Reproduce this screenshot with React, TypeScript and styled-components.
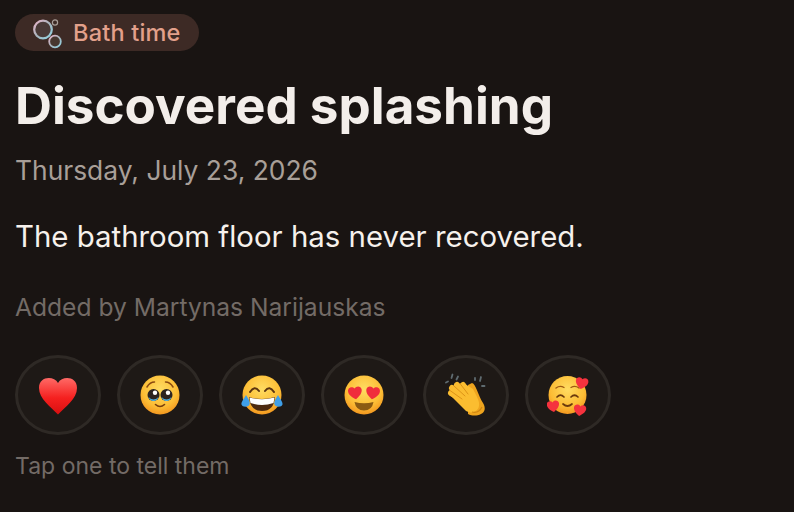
import React from 'react';
import styled, { createGlobalStyle } from 'styled-components';

const GlobalStyle = createGlobalStyle`
  html, body {
    margin: 0;
    padding: 0;
    background: #191412;
  }
  body {
    font-family: Inter, "Liberation Sans", sans-serif;
  }
`;

const Page = styled.div`
  width: 794px;
  height: 512px;
  box-sizing: border-box;
  padding: 14px 15px 0;
  overflow: hidden;
  background: #191412;
`;

const Badge = styled.div`
  display: inline-flex;
  align-items: center;
  gap: 9px;
  height: 37px;
  box-sizing: border-box;
  padding: 0 18px 0 17px;
  border-radius: 19px;
  background: #3d2a25;
  color: #e2a08b;
  font-size: 23.5px;
  font-weight: 500;
  letter-spacing: 0.2px;
`;

const Title = styled.h1`
  margin: 19px 0 0;
  font-size: 51.2px;
  line-height: 66px;
  font-weight: 700;
  color: #f3eeea;
`;

const DateLine = styled.div`
  margin-top: 15px;
  font-size: 26.4px;
  line-height: 34px;
  color: #a89f98;
`;

const Body = styled.p`
  margin: 31px 0 0;
  font-size: 29.4px;
  line-height: 38px;
  color: #f6f1ec;
`;

const Author = styled.div`
  margin-top: 36px;
  font-size: 24.6px;
  line-height: 30px;
  color: #736b66;
`;

const Reactions = styled.div`
  display: flex;
  gap: 16px;
  margin-top: 33px;
`;

const ReactionButton = styled.button`
  width: 86px;
  height: 80px;
  padding: 0;
  display: flex;
  align-items: center;
  justify-content: center;
  box-sizing: border-box;
  border: 3px solid #2e2925;
  border-radius: 50%;
  background: #1e1916;
`;

const Hint = styled.div`
  margin-top: 17px;
  font-size: 23px;
  line-height: 28px;
  color: #736b66;
`;

const Bubbles = () => (
  <svg width="32" height="32" viewBox="0 0 32 32" fill="none">
    <defs>
      <linearGradient id="bub" x1="0" y1="0" x2="1" y2="1">
        <stop offset="0" stopColor="#e8b4c8" />
        <stop offset="0.5" stopColor="#a8b4bc" />
        <stop offset="1" stopColor="#8fd6e6" />
      </linearGradient>
    </defs>
    <circle cx="11" cy="12.5" r="8.8" fill="#4a3a37" stroke="url(#bub)" strokeWidth="2.2" />
    <circle cx="23" cy="24.5" r="5.8" fill="#47372f" stroke="url(#bub)" strokeWidth="1.8" />
    <circle cx="23" cy="5.5" r="2.6" stroke="#a89e98" strokeWidth="1.2" />
  </svg>
);

const FaceDefs = ({ id }: { id: string }) => (
  <radialGradient id={id} cx="0.5" cy="0.35" r="0.72">
    <stop offset="0" stopColor="#ffdc62" />
    <stop offset="0.62" stopColor="#fcbd35" />
    <stop offset="1" stopColor="#ef8a18" />
  </radialGradient>
);

const smallHeart = 'M0 -3C-2 -6 -7 -5 -7 -1C-7 3 -3 6 0 8C3 6 7 3 7 -1C7 -5 2 -6 0 -3Z';

const HeartEmoji = () => (
  <svg width="40" height="40" viewBox="0 0 40 40">
    <defs>
      <linearGradient id="heartFill" x1="0" y1="0" x2="0" y2="1">
        <stop offset="0" stopColor="#ff6a66" />
        <stop offset="0.55" stopColor="#f5201f" />
        <stop offset="1" stopColor="#d80f10" />
      </linearGradient>
    </defs>
    <path d="M20 8C16 0.5 1 0.8 1 13C1 24 13 32 20 39.5C27 32 39 24 39 13C39 0.8 24 0.5 20 8Z" fill="url(#heartFill)" />
  </svg>
);

const PleadingEmoji = () => (
  <svg width="40" height="40" viewBox="0 0 40 40">
    <defs><FaceDefs id="faceA" /></defs>
    <circle cx="20" cy="20" r="19.5" fill="url(#faceA)" />
    <path d="M7 12Q10 7 14.5 7M33 12Q30 7 25.5 7" stroke="#8a4a10" strokeWidth="1.5" fill="none" strokeLinecap="round" />
    <circle cx="13.5" cy="20" r="6" fill="#2c2320" />
    <circle cx="26.5" cy="20" r="6" fill="#2c2320" />
    <path d="M8.5 22Q13.5 27 18.5 22Q17 26 13.5 26Q10 26 8.5 22ZM21.5 22Q26.5 27 31.5 22Q30 26 26.5 26Q23 26 21.5 22Z" fill="#4fb4e8" />
    <circle cx="15" cy="17.8" r="2.2" fill="#fff" />
    <circle cx="28" cy="17.8" r="2.2" fill="#fff" />
    <path d="M15.5 29.5Q20 33.5 24.5 29.5" stroke="#7a3f0c" strokeWidth="1.6" fill="none" strokeLinecap="round" />
  </svg>
);

const JoyEmoji = () => (
  <svg width="42" height="40" viewBox="0 0 42 40">
    <defs><FaceDefs id="faceB" /></defs>
    <circle cx="21" cy="20" r="19.5" fill="url(#faceB)" />
    <path d="M9 17Q13.5 10 18 16M24 16Q28.5 10 33 17" stroke="#5b3410" strokeWidth="2" fill="none" strokeLinecap="round" />
    <path d="M8 22Q21 26 34 22Q33 36 21 36Q9 36 8 22Z" fill="#4c2a10" />
    <path d="M8.5 22.5Q21 26 33.5 22.5L32.5 28Q21 32 9.5 28Z" fill="#fff" />
    <path d="M5 20C3 24 0 27 0.5 29.5C1.5 32.5 7 32.5 8.5 29.5C9.5 27 7 23 5 20Z" fill="#3f9fe8" />
    <path d="M37 20C39 24 42 27 41.5 29.5C40.5 32.5 35 32.5 33.5 29.5C32.5 27 35 23 37 20Z" fill="#3f9fe8" />
  </svg>
);

const LoveEyesEmoji = () => (
  <svg width="40" height="40" viewBox="0 0 40 40">
    <defs><FaceDefs id="faceC" /></defs>
    <circle cx="20" cy="20" r="19.5" fill="url(#faceC)" />
    <path d="M10.5 27Q20 29.5 29.5 27Q28 35.5 20 35.5Q12 35.5 10.5 27Z" fill="#8a5a12" />
    <g fill="#f02d3c">
      <path d={smallHeart} transform="translate(11 16.5) rotate(-8) scale(0.98)" />
      <path d={smallHeart} transform="translate(29 16.5) rotate(8) scale(0.98)" />
    </g>
  </svg>
);

const ClapEmoji = () => (
  <svg width="44" height="44" viewBox="0 0 44 44">
    <g stroke="#5f6b70" strokeWidth="1.8" strokeLinecap="round">
      <path d="M2 9.5L4 8.5M7.5 5L8.5 1.5M12.5 6.5L14 3.5M31 7L31 5M36 8L37 4M38 13L40.5 13" />
    </g>
    <path d="M24 12L28 10C32 11 34 22 39 30C42 35 41 39 37 41C33 43 28 43 24 41Z" fill="#eea41e" />
    <g stroke="#fbbd30" strokeWidth="6" strokeLinecap="round">
      <path d="M18 26L7 20" />
      <path d="M20 24L8 15" />
      <path d="M22 22L13 12" />
      <path d="M25 22L19 12" />
    </g>
    <path d="M6 22L22 38C27 41 34 39 35 33C36 28 32 22 29 16L21 11L9 15Z" fill="#fbbd30" />
    <g stroke="#d98f14" strokeWidth="0.9" strokeLinecap="round" fill="none">
      <path d="M6 17.5L18 26" />
      <path d="M10 13L21 23" />
      <path d="M16 10.5L24 21" />
    </g>
    <path d="M28 39C32 40 36 38 38 34" stroke="#cf8612" strokeWidth="1.2" fill="none" />
  </svg>
);

const SmilingHeartsEmoji = () => (
  <svg width="42" height="42" viewBox="0 0 42 42">
    <defs><FaceDefs id="faceD" /></defs>
    <circle cx="20.5" cy="21" r="19" fill="url(#faceD)" />
    <path d="M9 14Q13 11 17 13.5M24 13.5Q28 11 32 14" stroke="#a05a12" strokeWidth="1.4" fill="none" strokeLinecap="round" />
    <path d="M10 23Q13.5 19.5 17 23M24 23Q27.5 19.5 31 23" stroke="#6b3a0c" strokeWidth="1.7" fill="none" strokeLinecap="round" />
    <path d="M16 30Q20.5 34 25 30" stroke="#6b3a0c" strokeWidth="1.7" fill="none" strokeLinecap="round" />
    <g fill="#f5323e">
      <path d={smallHeart} transform="translate(35 8) rotate(10) scale(0.9)" />
      <path d={smallHeart} transform="translate(6 31) rotate(-8) scale(0.88)" />
      <path d={smallHeart} transform="translate(33 35) rotate(8) scale(0.88)" />
    </g>
  </svg>
);

const reactions = [
  { id: 'heart', Icon: HeartEmoji },
  { id: 'pleading', Icon: PleadingEmoji },
  { id: 'joy', Icon: JoyEmoji },
  { id: 'love', Icon: LoveEyesEmoji },
  { id: 'clap', Icon: ClapEmoji },
  { id: 'hearts', Icon: SmilingHeartsEmoji },
];

const App: React.FC = () => (
  <Page>
    <GlobalStyle />
    <Badge>
      <Bubbles />
      Bath time
    </Badge>
    <Title>Discovered splashing</Title>
    <DateLine>Thursday, July 23, 2026</DateLine>
    <Body>The bathroom floor has never recovered.</Body>
    <Author>Added by Martynas Narijauskas</Author>
    <Reactions>
      {reactions.map(({ id, Icon }) => (
        <ReactionButton key={id}>
          <Icon />
        </ReactionButton>
      ))}
    </Reactions>
    <Hint>Tap one to tell them</Hint>
  </Page>
);

export default App;
